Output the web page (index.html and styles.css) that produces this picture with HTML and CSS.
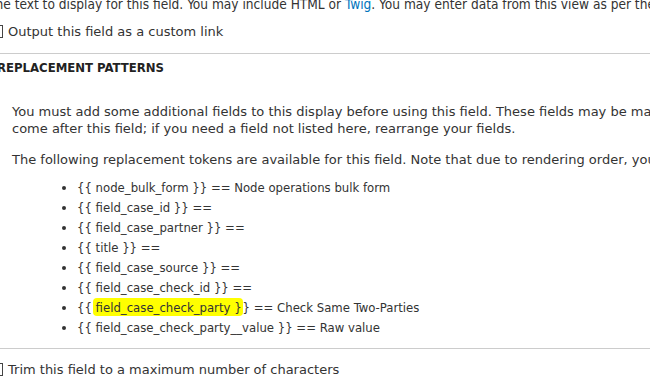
FILE: index.html
```html
<!DOCTYPE html>
<html>
<head>
<link rel="stylesheet" href="styles.css">
</head>
<body>
<div class="page">
  <div class="description">The text to display for this field. You may include HTML or <a href="#">Twig</a>. You may enter data from this view as per the replacement patterns below.</div>

  <label class="check"><input type="checkbox"> Output this field as a custom link</label>

  <div class="patterns">
    <div class="patterns_title">REPLACEMENT PATTERNS</div>
    <div class="patterns_body">
      <p>You must add some additional fields to this display before using this field. These fields may be marked as <em>Exclude from display</em> if you prefer. Note that due to rendering order, you cannot use fields that<br>come after this field; if you need a field not listed here, rearrange your fields.</p>
      <p>The following replacement tokens are available for this field. Note that due to rendering order, you cannot use fields that come after this field.</p>
      <ul class="tokens">
        <li>{{ node_bulk_form }} == Node operations bulk form</li>
        <li>{{ field_case_id }} ==</li>
        <li>{{ field_case_partner }} ==</li>
        <li>{{ title }} ==</li>
        <li>{{ field_case_source }} ==</li>
        <li>{{ field_case_check_id }} ==</li>
        <li>{{ <span class="marker">field_case_check_party }</span>} == Check Same Two-Parties</li>
        <li>{{ field_case_check_party__value }} == Raw value</li>
      </ul>
    </div>
  </div>

  <label class="check"><input type="checkbox"> Trim this field to a maximum number of characters</label>
</div>
</body>
</html>
```
FILE: styles.css
```css
body {
  margin: 0;
  font-family: "DejaVu Sans", sans-serif;
  font-size: 13px;
  color: #333;
  background: #fff;
  overflow: hidden;
}

.page {
  margin-left: -3px;
  margin-top: -6px;
  white-space: nowrap;
}

.description {
  margin-left: -9px;
  line-height: 20px;
  font-family: "DejaVu Sans Condensed", "DejaVu Sans", sans-serif;
  font-size: 13.6px;
}

.description a {
  color: #0074bd;
  text-decoration: none;
}

.check {
  display: flex;
  align-items: center;
  margin-left: -6px;
  height: 24px;
  margin-top: 5px;
}

.check input {
  appearance: none;
  width: 12px;
  height: 13px;
  border: 1px solid #444;
  margin: 0 5px 0 0;
  background: #fff;
}

.patterns {
  border-top: 1px solid #ccc;
  border-bottom: 1px solid #ccc;
  margin-top: 10px;
  padding-bottom: 10px;
}

.patterns_title {
  font-family: "DejaVu Sans Condensed", "DejaVu Sans", sans-serif;
  font-weight: bold;
  text-transform: uppercase;
  padding-top: 6px;
  line-height: 16px;
  color: #222;
}

.patterns_body {
  padding: 27px 0 0 15px;
}

.patterns_body p {
  margin: 0 0 14px 0;
  line-height: 17px;
}

.patterns_body p:last-of-type {
  margin-bottom: 10px;
}

.tokens {
  margin: 0;
  padding-left: 65px;
  list-style: disc;
  font-family: "DejaVu Sans Condensed", "DejaVu Sans", sans-serif;
}

.tokens li {
  line-height: 20px;
}

.marker {
  background: #ffff00;
  border-radius: 4px;
  padding: 2px 1px 1px 3px;
  margin-left: -3px;
}

.check + .patterns + .check {
  margin-top: 8px;
}
```
